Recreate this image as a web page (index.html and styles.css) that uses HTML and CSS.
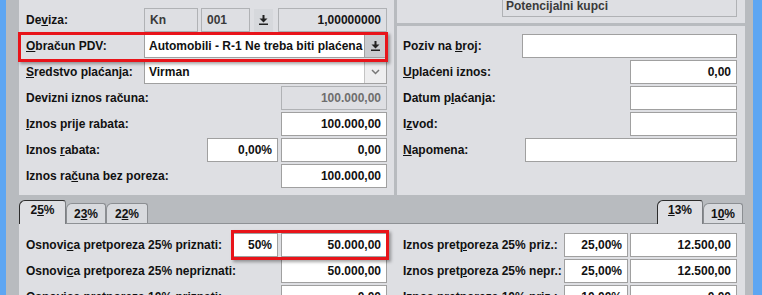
FILE: index.html
```html
<html>
<head>
<title>Obračun PDV</title>
<meta name="viewport" content="width=device-width, initial-scale=1">
<link rel="stylesheet" href="styles.css">
</head>
<body>
<div class="win">
  <div class="top">
    <div class="panel left">
      <div class="row">
        <span class="lbl">De<u>v</u>iza:</span>
        <span class="fld dis w-kn">Kn</span>
        <span class="fld dis w-code">001</span>
        <span class="dl"><svg width="9" height="10" viewBox="0 0 9 10"><path d="M3.5 0h2v3.5h-2z M0.5 3.5h8L4.5 7.5z M0 8.5h9V10H0z" fill="#222"/></svg></span>
        <span class="fld dis num w-rate dark">1,00000000</span>
      </div>
      <div class="row">
        <span class="lbl"><u>O</u>bračun PDV:</span>
        <div class="combo">
          <span class="combo-text">Automobili - R-1 Ne treba biti plaćena</span>
          <span class="combo-btn grey"><svg width="9" height="10" viewBox="0 0 9 10"><path d="M3.5 0h2v3.5h-2z M0.5 3.5h8L4.5 7.5z M0 8.5h9V10H0z" fill="#222"/></svg></span>
        </div>
      </div>
      <div class="row">
        <span class="lbl"><u>S</u>redstvo plaćanja:</span>
        <div class="combo">
          <span class="combo-text">Virman</span>
          <span class="combo-btn"><svg width="9" height="6" viewBox="0 0 9 6"><path d="M1 1l3.5 3.5L8 1" stroke="#777" stroke-width="1.5" fill="none"/></svg></span>
        </div>
      </div>
      <div class="row">
        <span class="lbl">Devizni iznos računa:</span>
        <span class="fld dis num w-val push light">100.000,00</span>
      </div>
      <div class="row">
        <span class="lbl"><u>I</u>znos prije rabata:</span>
        <span class="fld num w-val push">100.000,00</span>
      </div>
      <div class="row">
        <span class="lbl">Iznos <u>r</u>abata:</span>
        <span class="fld num w-pct push">0,00%</span>
        <span class="fld num w-val gap3">0,00</span>
      </div>
      <div class="row">
        <span class="lbl">Iznos ra<u>č</u>una bez poreza:</span>
        <span class="fld num w-val push">100.000,00</span>
      </div>
    </div>
    <div class="side">
      <div class="panel side-top">
        <span class="fld dis kupci">Potencijalni kupci</span>
      </div>
      <div class="panel side-main">
        <div class="row">
          <span>Poziv na <u>b</u>roj:</span>
          <span class="fld push w-poziv"></span>
        </div>
        <div class="row">
          <span><u>U</u>plaćeni iznos:</span>
          <span class="fld num push w-val2">0,00</span>
        </div>
        <div class="row">
          <span>Datum p<u>l</u>aćanja:</span>
          <span class="fld push w-val2"></span>
        </div>
        <div class="row">
          <span>I<u>z</u>vod:</span>
          <span class="fld push w-val2"></span>
        </div>
        <div class="row">
          <span><u>N</u>apomena:</span>
          <span class="fld push w-napomena"></span>
        </div>
      </div>
    </div>
  </div>

  <div class="tabstrip">
    <div class="tabs">
      <span class="tab sel">2<u>5</u>%</span>
      <span class="tab">2<u>3</u>%</span>
      <span class="tab wide">2<u>2</u>%</span>
    </div>
    <div class="tabs">
      <span class="tab sel"><u>1</u>3%</span>
      <span class="tab">1<u>0</u>%</span>
    </div>
  </div>

  <div class="tabbody">
    <div class="col col-l">
      <div class="row">
        <span>Osnovi<u>c</u>a pretporeza 25% priznati:</span>
        <span class="fld num push w-small">50%</span>
        <span class="fld num w-val gap3">50.000,00</span>
      </div>
      <div class="row">
        <span>Osnovi<u>c</u>a pretporeza 25% nepriznati:</span>
        <span class="fld num push w-val">50.000,00</span>
      </div>
      <div class="row">
        <span>Osnovi<u>c</u>a pretporeza 10% priznati:</span>
        <span class="fld num push w-val">0,00</span>
      </div>
    </div>
    <div class="col col-r">
      <div class="row">
        <span>Iznos pret<u>p</u>oreza 25% priz.:</span>
        <span class="fld num push w-pct2">25,00%</span>
        <span class="fld num w-val2 gap2">12.500,00</span>
      </div>
      <div class="row">
        <span>Iznos pret<u>p</u>oreza 25% nepr.:</span>
        <span class="fld num push w-pct2">25,00%</span>
        <span class="fld num w-val2 gap2">12.500,00</span>
      </div>
      <div class="row">
        <span>Iznos pret<u>p</u>oreza 10% priz.:</span>
        <span class="fld num push w-pct2">10,00%</span>
        <span class="fld num w-val2 gap2">0,00</span>
      </div>
    </div>
  </div>
</div>

<div class="mark mark-pdv"></div>
<div class="mark mark-osn"></div>
</body>
</html>
```

FILE: styles.css
```css
body {
  margin: 0;
  width: 762px;
  height: 295px;
  overflow: hidden;
  position: relative;
  background: #b8bbbf;
  color: #111;
  font: bold 12px "Liberation Sans", Arial, sans-serif;
}

.win {
  height: 295px;
  box-sizing: border-box;
  border-left: 6px solid #5ea6f2;
  border-right: 9px solid #5ea6f2;
  padding: 0 8px 0 13px;
  display: flex;
  flex-direction: column;
}

.top {
  display: flex;
  gap: 3px;
  height: 195px;
  flex: none;
}

.panel {
  background: #dedfe3;
}

.left {
  width: 375px;
  box-sizing: border-box;
  padding: 8px 7px 0;
  display: flex;
  flex-direction: column;
  gap: 2px;
}

.side {
  width: 348px;
  display: flex;
  flex-direction: column;
  gap: 3px;
}

.side-top {
  height: 23px;
  flex: none;
  overflow: hidden;
  padding: 0 8px 0 105px;
}

.side-main {
  flex: 1;
  padding: 8px 8px 0 6px;
  display: flex;
  flex-direction: column;
  gap: 2px;
}

.row {
  display: flex;
  align-items: center;
  height: 24px;
  flex: none;
  white-space: nowrap;
}

.lbl {
  width: 118px;
  flex: none;
}

.fld {
  height: 24px;
  box-sizing: border-box;
  flex: none;
  border: 1px solid #a0a0a0;
  background: #fff;
  padding: 0 5px;
  display: flex;
  align-items: center;
  overflow: hidden;
  white-space: nowrap;
}

.num {
  justify-content: flex-end;
}

.dis {
  background: #dedfe3;
  border-color: #b0b2b5;
  color: #3a3a3a;
}
.dis.dark { color: #151515; }
.dis.light { color: #6e6e6e; }

.push { margin-left: auto; }
.gap3 { margin-left: 3px; }
.gap2 { margin-left: 2px; }

.w-kn { width: 54px; }
.w-code { width: 49px; margin-left: 3px; }
.w-rate { width: 109px; margin-left: 5px; }
.w-val { width: 106px; }
.w-val2 { width: 107px; }
.w-pct { width: 71px; }
.w-pct2 { width: 64px; }
.w-small { width: 45px; }
.w-poziv { width: 215px; }
.w-napomena { width: 212px; }

.dl {
  width: 19px;
  height: 23px;
  margin-left: 4px;
  background: #d6d8dc;
  display: flex;
  align-items: center;
  justify-content: center;
}

.kupci {
  width: 235px;
  height: 22px;
  margin-top: -5px;
  padding-left: 3px;
}

.combo {
  display: flex;
  width: 243px;
  height: 24px;
  box-sizing: border-box;
  border: 1px solid #a0a0a0;
  background: #fff;
}

.combo-text {
  flex: 1;
  padding-left: 4px;
  display: flex;
  align-items: center;
  overflow: hidden;
}

.combo-btn {
  width: 21px;
  background: #eeeeef;
  border-left: 1px solid #c4c4c4;
  display: flex;
  align-items: center;
  justify-content: center;
}

.combo-btn.grey {
  background: #c9cbcf;
  border-left-color: #a0a0a0;
}

/* tabs */
.tabstrip {
  height: 28px;
  flex: none;
  display: flex;
  justify-content: space-between;
  align-items: flex-end;
  padding-right: 2px;
}

.tabs {
  display: flex;
  align-items: flex-end;
}

.tab {
  width: 40px;
  height: 20px;
  box-sizing: border-box;
  border: 1px solid #8b8e92;
  border-bottom: none;
  border-radius: 6px 3px 0 0;
  background: #d8dade;
  text-align: center;
  line-height: 20px;
  color: #111;
}

.tab.wide { width: 42px; }

.tab.sel {
  width: 47px;
  height: 24px;
  margin-bottom: -1px;
  background: #dedfe3;
  border-color: #2c2c2c #7c7f83 transparent #2c2c2c;
  line-height: 16px;
  padding-top: 1px;
  position: relative;
  z-index: 1;
}

.tabs + .tabs .tab.sel { width: 46px; }

.tabbody {
  flex: 1;
  display: flex;
  background: #dedfe3;
  border-top: 1px solid #8e9195;
  overflow: hidden;
}

.col {
  display: flex;
  flex-direction: column;
  gap: 2px;
  padding-top: 9px;
  box-sizing: border-box;
}

.col-l {
  width: 378px;
  padding-left: 7px;
  padding-right: 10px;
}

.col-r {
  width: 348px;
  padding-left: 6px;
  padding-right: 8px;
}

/* red highlight marks */
.mark {
  position: absolute;
  box-sizing: border-box;
  border: 3px solid #e8141a;
  box-shadow: 2px 2px 3px rgba(0, 0, 0, 0.35);
}

.mark-pdv {
  left: 18px;
  top: 32px;
  width: 370px;
  height: 30px;
}

.mark-osn {
  left: 231px;
  top: 230px;
  width: 158px;
  height: 30px;
}
```
